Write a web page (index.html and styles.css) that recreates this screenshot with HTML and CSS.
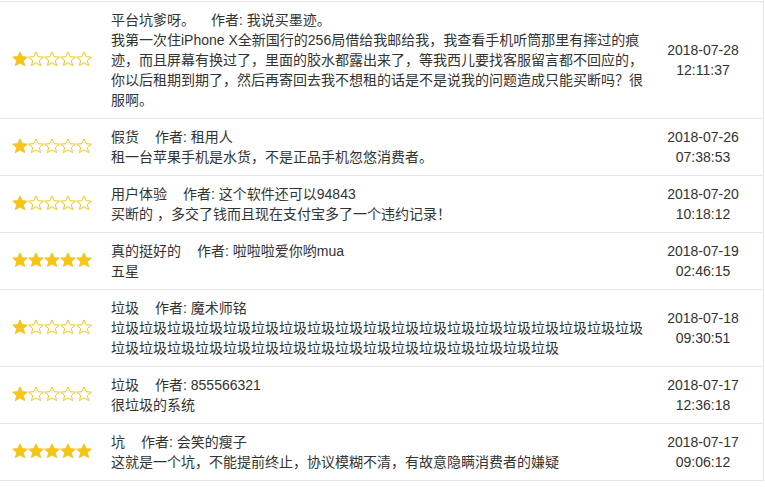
FILE: index.html
```html
<!DOCTYPE html>
<html>
<head>
    <meta charset="utf-8">
    <title>用户评价</title>
    <link rel="stylesheet" href="styles.css">
</head>
<body>
    <svg class="defs" width="0" height="0">
        <defs>
            <symbol id="star" viewBox="0 0 16 16">
                <polygon points="8,0.9 10.1,5.7 15.3,6.1 11.3,9.5 12.6,14.6 8,11.9 3.4,14.6 4.7,9.5 0.7,6.1 5.9,5.7"/>
            </symbol>
        </defs>
    </svg>
    <div class="wrap">
        <table class="comments">
            <colgroup>
                <col class="c-rate">
                <col class="c-text">
                <col class="c-date">
            </colgroup>
            <tr>
                <td class="rate">
                    <svg class="star on"><use href="#star"/></svg><svg class="star"><use href="#star"/></svg><svg class="star"><use href="#star"/></svg><svg class="star"><use href="#star"/></svg><svg class="star"><use href="#star"/></svg>
                </td>
                <td class="text">
                    <span class="title">平台坑爹呀。</span>作者: 我说买墨迹。<br>
                    我第一次住iPhone X全新国行的256局借给我邮给我，我查看手机听筒那里有摔过的痕迹，而且屏幕有换过了，里面的胶水都露出来了，等我西儿要找客服留言都不回应的，你以后租期到期了，然后再寄回去我不想租的话是不是说我的问题造成只能买断吗？很服啊。
                </td>
                <td class="date">2018-07-28<br>12:11:37</td>
            </tr>
            <tr>
                <td class="rate">
                    <svg class="star on"><use href="#star"/></svg><svg class="star"><use href="#star"/></svg><svg class="star"><use href="#star"/></svg><svg class="star"><use href="#star"/></svg><svg class="star"><use href="#star"/></svg>
                </td>
                <td class="text">
                    <span class="title">假货</span>作者: 租用人<br>
                    租一台苹果手机是水货，不是正品手机忽悠消费者。
                </td>
                <td class="date">2018-07-26<br>07:38:53</td>
            </tr>
            <tr>
                <td class="rate">
                    <svg class="star on"><use href="#star"/></svg><svg class="star"><use href="#star"/></svg><svg class="star"><use href="#star"/></svg><svg class="star"><use href="#star"/></svg><svg class="star"><use href="#star"/></svg>
                </td>
                <td class="text">
                    <span class="title">用户体验</span>作者: 这个软件还可以94843<br>
                    买断的 ，多交了钱而且现在支付宝多了一个违约记录！
                </td>
                <td class="date">2018-07-20<br>10:18:12</td>
            </tr>
            <tr>
                <td class="rate">
                    <svg class="star on"><use href="#star"/></svg><svg class="star on"><use href="#star"/></svg><svg class="star on"><use href="#star"/></svg><svg class="star on"><use href="#star"/></svg><svg class="star on"><use href="#star"/></svg>
                </td>
                <td class="text">
                    <span class="title">真的挺好的</span>作者: 啦啦啦爱你哟mua<br>
                    五星
                </td>
                <td class="date">2018-07-19<br>02:46:15</td>
            </tr>
            <tr>
                <td class="rate">
                    <svg class="star on"><use href="#star"/></svg><svg class="star"><use href="#star"/></svg><svg class="star"><use href="#star"/></svg><svg class="star"><use href="#star"/></svg><svg class="star"><use href="#star"/></svg>
                </td>
                <td class="text">
                    <span class="title">垃圾</span>作者: 魔术师铭<br>
                    垃圾垃圾垃圾垃圾垃圾垃圾垃圾垃圾垃圾垃圾垃圾垃圾垃圾垃圾垃圾垃圾垃圾垃圾垃圾垃圾垃圾垃圾垃圾垃圾垃圾垃圾垃圾垃圾垃圾垃圾垃圾垃圾垃圾垃圾垃圾
                </td>
                <td class="date">2018-07-18<br>09:30:51</td>
            </tr>
            <tr>
                <td class="rate">
                    <svg class="star on"><use href="#star"/></svg><svg class="star"><use href="#star"/></svg><svg class="star"><use href="#star"/></svg><svg class="star"><use href="#star"/></svg><svg class="star"><use href="#star"/></svg>
                </td>
                <td class="text">
                    <span class="title">垃圾</span>作者: 855566321<br>
                    很垃圾的系统
                </td>
                <td class="date">2018-07-17<br>12:36:18</td>
            </tr>
            <tr>
                <td class="rate">
                    <svg class="star on"><use href="#star"/></svg><svg class="star on"><use href="#star"/></svg><svg class="star on"><use href="#star"/></svg><svg class="star on"><use href="#star"/></svg><svg class="star on"><use href="#star"/></svg>
                </td>
                <td class="text">
                    <span class="title">坑</span>作者: 会笑的瘦子<br>
                    这就是一个坑，不能提前终止，协议模糊不清，有故意隐瞒消费者的嫌疑
                </td>
                <td class="date">2018-07-17<br>09:06:12</td>
            </tr>
        </table>
    </div>
</body>
</html>
```

FILE: styles.css
```css
body {
    margin: 0;
    background: #fff;
    font-family: "Liberation Sans", "Noto Sans CJK SC", sans-serif;
    font-size: 14px;
    color: #333;
}
.defs {
    position: absolute;
}
.wrap {
    padding-top: 1px;
    width: 764px;
}
.comments {
    width: 764px;
    border-collapse: collapse;
    table-layout: fixed;
    border-right: 1px solid #e6e6e6;
}
.c-rate { width: 103px; }
.c-text { width: 552px; }
.comments td {
    border-top: 1px solid #e6e6e6;
    border-bottom: 1px solid #e6e6e6;
    padding: 8px;
    line-height: 20px;
    vertical-align: middle;
}
.rate {
    padding-left: 12px !important;
    padding-bottom: 10px !important;
    white-space: nowrap;
    font-size: 0;
}
.star {
    width: 16px;
    height: 16px;
    fill: none;
    stroke: #f5c518;
    stroke-width: 1;
    vertical-align: middle;
}
.star.on {
    fill: #f5c518;
}
.title {
    margin-right: 16px;
}
.date {
    text-align: center;
    padding-left: 2px !important;
    padding-right: 14px !important;
}
```
